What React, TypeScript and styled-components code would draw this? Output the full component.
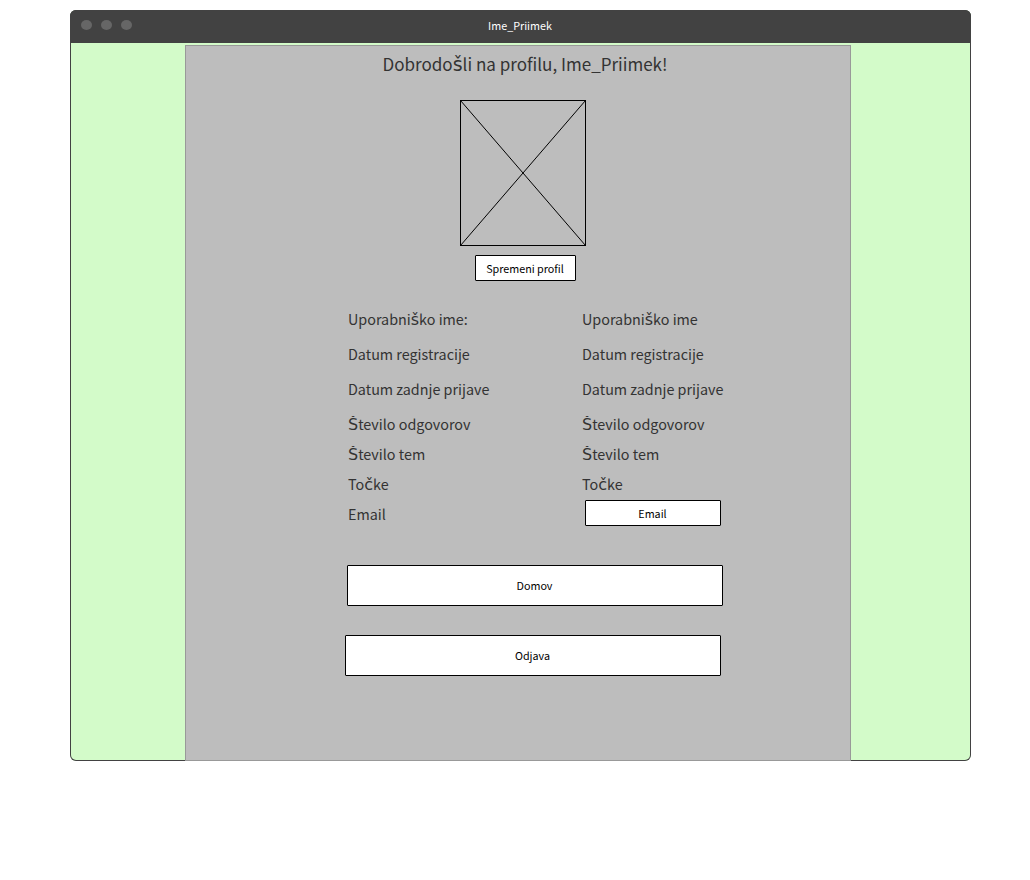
import React from "react";
import styled, { createGlobalStyle } from "styled-components";

const GlobalStyle = createGlobalStyle`
  * { box-sizing: border-box; }
  body {
    margin: 0;
    background: #fff;
    font-family: "Noto Sans CJK JP", "Liberation Sans", sans-serif;
  }
`;

const Window = styled.div`
  display: flex;
  flex-direction: column;
  width: 901px;
  height: 751px;
  margin: 10px 0 0 70px;
  border-radius: 6px;
  background: #d3fbc9;
  box-shadow: inset 0 0 0 1px #424242;
`;

const TitleBar = styled.header`
  display: grid;
  grid-template-columns: 1fr auto 1fr;
  align-items: center;
  flex: none;
  height: 33px;
  padding: 0 12px 2px 11px;
  border-radius: 6px 6px 0 0;
  background: #424242;
  color: #fff;
  font-size: 10.75px;
  line-height: 16px;
`;

const WindowControls = styled.div`
  display: flex;
  gap: 9px;
  margin-top: -1px;
`;

const Dot = styled.span`
  width: 11px;
  height: 10px;
  border-radius: 50%;
  background: #666;
`;

const Panel = styled.main`
  display: flex;
  flex-direction: column;
  width: 666px;
  height: 716px;
  margin: 2px 0 0 115px;
  border: 1px solid #999;
  background: #bdbdbd;
  color: #333;
`;

const Heading = styled.h1`
  margin: 3px 0 0 14px;
  height: 31px;
  font-size: 17.05px;
  font-weight: 400;
  line-height: 30px;
  text-align: center;
  white-space: nowrap;
`;

const Picture = styled.svg`
  display: block;
  flex: none;
  width: 126px;
  height: 146px;
  margin: 20px 0 9px 274px;
`;

const Button = styled.button<{ $width: number; $height: number; $left?: number }>`
  display: flex;
  align-items: center;
  justify-content: center;
  flex: none;
  width: ${(p) => p.$width}px;
  height: ${(p) => p.$height}px;
  margin: 0 0 0 ${(p) => p.$left ?? 0}px;
  padding: ${(p) => (p.$height < 30 ? 2 : 0)}px 1px 0 0;
  border: 1px solid #000;
  border-radius: 1px;
  background: #fff;
  color: #000;
  font: inherit;
  font-size: 10.75px;
  line-height: 16px;
  white-space: nowrap;
`;

const Details = styled.dl`
  display: flex;
  flex-direction: column;
  margin: 24px 0 0 162px;
`;

const Row = styled.div<{ $gap: number }>`
  display: grid;
  grid-template-columns: 234px 1fr;
  height: 30px;
  margin-bottom: ${(p) => p.$gap}px;
  font-size: 14.35px;
  line-height: 27px;
  white-space: nowrap;
`;

/* The top edge crops the accents of capital letters. */
const Cell = styled.span`
  clip-path: inset(6px 0 0 0);
`;

const Caron = styled.span`
  font-family: "DejaVu Sans", sans-serif;
  font-size: 1.115em;
  line-height: 1;
`;

function Text({ children }: { children: string }) {
  return (
    <>
      {children
        .split(/([šŠčČ])/)
        .map((part, i) => (i % 2 ? <Caron key={i}>{part}</Caron> : part))}
    </>
  );
}

const Actions = styled.div`
  display: flex;
  flex-direction: column;
  gap: 29px;
  margin-top: 35px;
`;

const details = [
  { label: "Uporabniško ime:", value: "Uporabniško ime", gap: 5 },
  { label: "Datum registracije", value: "Datum registracije", gap: 5 },
  { label: "Datum zadnje prijave", value: "Datum zadnje prijave", gap: 5 },
  { label: "Število odgovorov", value: "Število odgovorov", gap: 0 },
  { label: "Število tem", value: "Število tem", gap: 0 },
  { label: "Točke", value: "Točke", gap: 0 },
];

export default function App() {
  return (
    <>
      <GlobalStyle />
      <Window>
        <TitleBar>
          <WindowControls>
            <Dot />
            <Dot />
            <Dot />
          </WindowControls>
          <span>Ime_Priimek</span>
        </TitleBar>
        <Panel>
          <Heading><Text>Dobrodošli na profilu, Ime_Priimek!</Text></Heading>
          <Picture viewBox="0 0 126 146" fill="none" stroke="#000">
            <rect x="0.5" y="0.5" width="125" height="145" />
            <path d="M0.5 0.5L125.5 145.5M125.5 0.5L0.5 145.5" />
          </Picture>
          <Button $width={101} $height={26} $left={289}>Spremeni profil</Button>
          <Details>
            {details.map((d) => (
              <Row key={d.label} $gap={d.gap}>
                <Cell><Text>{d.label}</Text></Cell>
                <Cell><Text>{d.value}</Text></Cell>
              </Row>
            ))}
            <Row $gap={0}>
              <Cell>Email</Cell>
              <Button $width={136} $height={26} $left={3}>Email</Button>
            </Row>
          </Details>
          <Actions>
            <Button $width={376} $height={41} $left={161}>Domov</Button>
            <Button $width={376} $height={41} $left={159}>Odjava</Button>
          </Actions>
        </Panel>
      </Window>
    </>
  );
}
